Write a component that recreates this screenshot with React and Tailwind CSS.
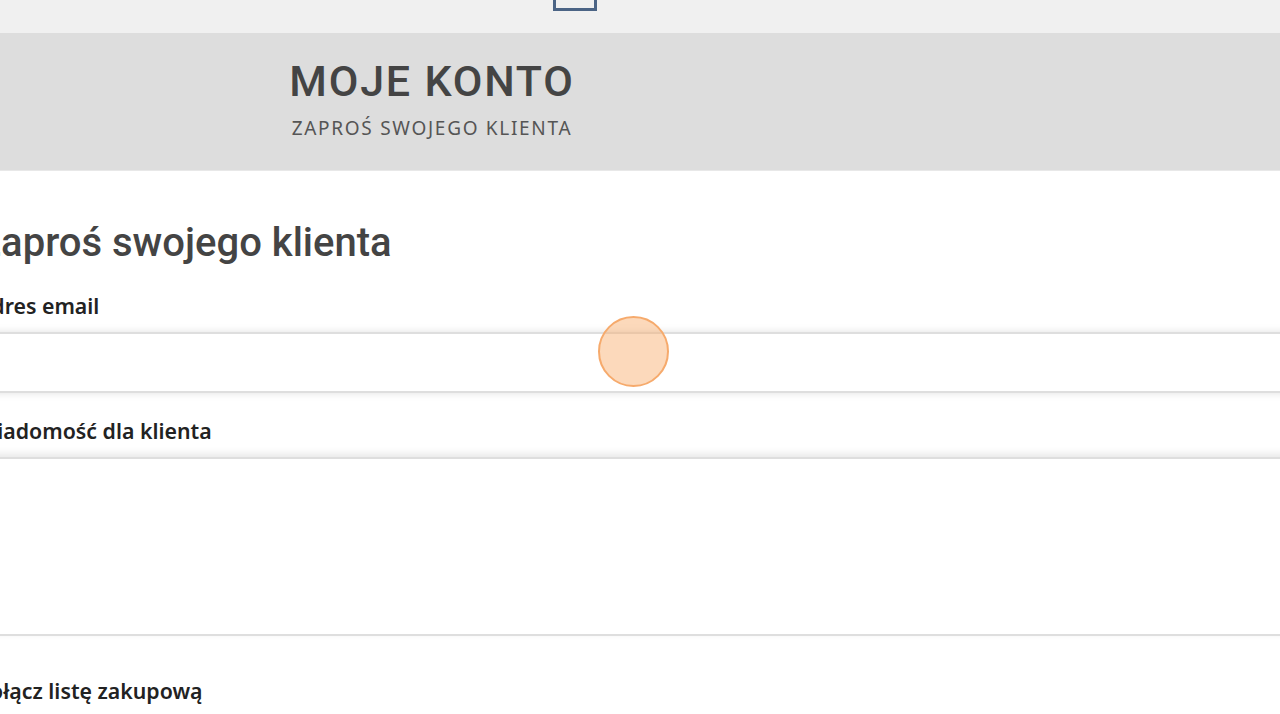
export default function App() {
  return (
    <div className="w-[1280px] h-[714px] overflow-hidden bg-white relative" style={{ fontFamily: '"Noto Sans", "Open Sans", sans-serif' }}>
      {/* top bar */}
      <div className="h-[33px] bg-[#f0f0f0] flex items-start">
        <div className="ml-[553px] w-[44px] h-[11px] border-[3px] border-t-0 border-[#4b6485]" />
      </div>

      {/* page header */}
      <div className="h-[138px] bg-[#dddddd] border-b border-[#e8e8e8]">
        <div className="w-[864px] flex flex-col items-center pt-[22px]">
          <h1 className="text-[43px] leading-[52px] font-medium tracking-[1.8px] text-[#444]" style={{ fontFamily: 'Roboto, sans-serif' }}>
            MOJE KONTO
          </h1>
          <p className="mt-[9px] text-[19px] leading-[24px] tracking-[1.7px] text-[#555]">
            ZAPROŚ SWOJEGO KLIENTA
          </p>
        </div>
      </div>

      {/* form */}
      <div className="ml-[-23px] mr-[-30px] pt-[47px]">
        <h2 className="text-[40px] leading-[50px] font-medium text-[#444]" style={{ fontFamily: 'Roboto, sans-serif' }}>
          Zaproś swojego klienta
        </h2>
        <label className="block mt-[24px] text-[21.3px] leading-[28px] font-semibold text-[#222]">
          Adres email
        </label>
        <div className="mt-[12px] h-[61px] bg-white border-y-2 border-[#dedede] shadow-[0_0_8px_rgba(0,0,0,0.12)]" />
        <label className="block mt-[24px] text-[21.3px] leading-[28px] font-semibold text-[#222]">
          Wiadomość dla klienta
        </label>
        <div className="mt-[12px] h-[179px] bg-white border-y-2 border-[#dedede] shadow-[0_-3px_8px_rgba(0,0,0,0.10)]" />
        <label className="block mt-[41px] text-[21.3px] leading-[28px] font-semibold text-[#222]">
          Połącz listę zakupową
        </label>
      </div>

      {/* touch indicator */}
      <div className="absolute left-[598px] top-[316px] w-[71px] h-[71px] rounded-full border-2 border-[#f6aa6c] bg-[rgba(249,170,105,0.45)]" />
    </div>
  );
}
